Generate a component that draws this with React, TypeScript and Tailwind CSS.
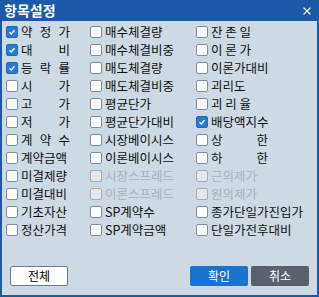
import { X } from "lucide-react";

type Item = {
  label: string;
  checked?: boolean;
  disabled?: boolean;
  spread?: number;
};

const col1: Item[] = [
  { label: "약정가", checked: true, spread: 49 },
  { label: "대비", checked: true, spread: 49 },
  { label: "등락률", checked: true, spread: 49 },
  { label: "시가", spread: 49 },
  { label: "고가", spread: 49 },
  { label: "저가", spread: 49 },
  { label: "계약수", spread: 49 },
  { label: "계약금액" },
  { label: "미결제량" },
  { label: "미결대비" },
  { label: "기초자산" },
  { label: "정산가격" },
];

const col2: Item[] = [
  { label: "매수체결량" },
  { label: "매수체결비중" },
  { label: "매도체결량" },
  { label: "매도체결비중" },
  { label: "평균단가" },
  { label: "평균단가대비" },
  { label: "시장베이시스" },
  { label: "이론베이시스" },
  { label: "시장스프레드", disabled: true },
  { label: "이론스프레드", disabled: true },
  { label: "SP계약수" },
  { label: "SP계약금액" },
];

const col3: Item[] = [
  { label: "잔존일", spread: 40 },
  { label: "이론가", spread: 40 },
  { label: "이론가대비" },
  { label: "괴리도" },
  { label: "괴리율", spread: 40 },
  { label: "배당액지수", checked: true },
  { label: "상한", spread: 57 },
  { label: "하한", spread: 57 },
  { label: "근의제가", disabled: true },
  { label: "원의제가", disabled: true },
  { label: "종가단일가진입가" },
  { label: "단일가전후대비" },
];

const Box = ({ checked, disabled }: { checked?: boolean; disabled?: boolean }) => {
  if (checked) {
    return (
      <span className="w-3 h-3 rounded-[2px] bg-[#2a79d6] border border-[#2468bd] flex items-center justify-center shrink-0">
        <svg width="8" height="8" viewBox="0 0 8 8">
          <polyline points="1.5,4.2 3.3,6 6.5,2.2" fill="none" stroke="#fff" strokeWidth="1.4" />
        </svg>
      </span>
    );
  }
  return (
    <span
      className={
        disabled
          ? "w-3 h-3 rounded-[2px] bg-[#e6e8ea] border border-[#a3adb8] shrink-0"
          : "w-3 h-3 rounded-[2px] bg-white border border-[#7f8da3] shrink-0"
      }
    />
  );
};

const Cell = ({ item }: { item: Item }) => {
  const color = item.disabled ? "text-[#a7b0ba]" : "text-[#111]";
  return (
    <div className="flex items-center gap-[3px] h-[18px]">
      <Box checked={item.checked} disabled={item.disabled} />
      {item.spread ? (
        <span className={`flex justify-between ${color}`} style={{ width: item.spread }}>
          {item.label.split("").map((c, i) => (
            <span key={i}>{c}</span>
          ))}
        </span>
      ) : (
        <span className={`whitespace-nowrap ${color}`}>{item.label}</span>
      )}
    </div>
  );
};

export default function App() {
  return (
    <div
      className="w-[319px] h-[297px] bg-[#cdd9e3] border-2 border-t-0 border-[#1b5aa6] flex flex-col text-[12.5px] leading-[18px]"
      style={{ fontFamily: '"Noto Sans CJK KR", "Noto Sans", sans-serif' }}
    >
      <div className="h-[21px] -mx-[2px] bg-[#1b5aa6] flex items-center justify-between pl-[4px] pr-[6px]">
        <span className="text-white font-bold text-[14px] leading-[21px]">항목설정</span>
        <X className="w-[12px] h-[12px] text-white" strokeWidth={2.5} />
      </div>
      <div className="grid grid-cols-[84px_106px_1fr] pl-[4px] mt-[2px]">
        {col1.map((_, r) => (
          <div key={r} className="contents">
            <Cell item={col1[r]} />
            <Cell item={col2[r]} />
            <Cell item={col3[r]} />
          </div>
        ))}
      </div>
      <div className="mt-[27px] flex items-center px-[8px]">
        <button className="w-[58px] h-[20px] bg-white border border-[#6b7b92] rounded-[2px] text-[12px] text-black">
          전체
        </button>
        <div className="ml-auto flex gap-[3px]">
          <button className="w-[58px] h-[20px] bg-[#1a72d2] rounded-[2px] text-[12px] text-white">확인</button>
          <button className="w-[58px] h-[20px] bg-[#5a616d] rounded-[2px] text-[12px] text-white">취소</button>
        </div>
      </div>
    </div>
  );
}
